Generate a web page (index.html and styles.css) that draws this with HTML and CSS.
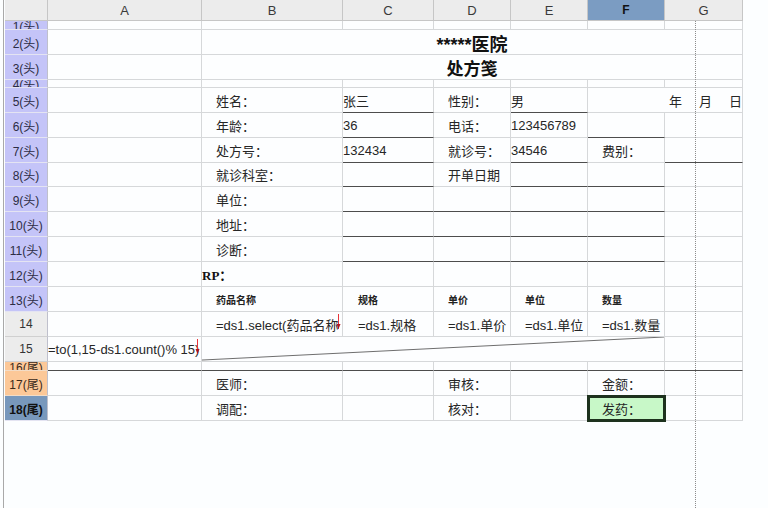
FILE: index.html
```html
<!DOCTYPE html>
<html>
<head>
<meta charset="utf-8">
<link rel="stylesheet" href="styles.css">
</head>
<body>
<div class="frame">
  <div class="sheet">
    <div class="row r21 colhead">
      <div class="c hd"></div>
      <div class="c hd ctr">A</div>
      <div class="c hd ctr">B</div>
      <div class="c hd ctr">C</div>
      <div class="c hd ctr">D</div>
      <div class="c hd ctr">E</div>
      <div class="c hd ctr sel">F</div>
      <div class="c hd ctr">G</div>
    </div>
    <div class="row r9">
      <div class="c rh tou">1(头)</div>
      <div class="c"></div><div class="c"></div><div class="c"></div><div class="c"></div><div class="c"></div><div class="c"></div><div class="c"></div>
    </div>
    <div class="row r25">
      <div class="c rh tou">2(头)</div>
      <div class="c"></div>
      <div class="c s6 ctr title1">*****医院</div>
    </div>
    <div class="row r25">
      <div class="c rh tou">3(头)</div>
      <div class="c"></div>
      <div class="c s6 ctr title2">处方笺</div>
    </div>
    <div class="row r8">
      <div class="c rh tou">4(头)</div>
      <div class="c"></div><div class="c"></div><div class="c"></div><div class="c"></div><div class="c"></div><div class="c"></div><div class="c"></div>
    </div>
    <div class="row r25">
      <div class="c rh tou">5(头)</div>
      <div class="c"></div>
      <div class="c pl">姓名：</div>
      <div class="c u p0">张三</div>
      <div class="c pl">性别：</div>
      <div class="c u p0">男</div>
      <div class="c s2 date"><span>年</span><span>月</span><span>日</span></div>
    </div>
    <div class="row r25">
      <div class="c rh tou">6(头)</div>
      <div class="c"></div>
      <div class="c pl">年龄：</div>
      <div class="c u p0">36</div>
      <div class="c pl">电话：</div>
      <div class="c p0">123456789</div>
      <div class="c u"></div>
      <div class="c"></div>
    </div>
    <div class="row r25">
      <div class="c rh tou">7(头)</div>
      <div class="c"></div>
      <div class="c pl">处方号：</div>
      <div class="c u p0">132434</div>
      <div class="c pl">就诊号：</div>
      <div class="c u p0">34546</div>
      <div class="c pl">费别：</div>
      <div class="c u"></div>
    </div>
    <div class="row r24">
      <div class="c rh tou">8(头)</div>
      <div class="c"></div>
      <div class="c pl">就诊科室：</div>
      <div class="c u"></div>
      <div class="c pl">开单日期</div>
      <div class="c u"></div>
      <div class="c u"></div>
      <div class="c"></div>
    </div>
    <div class="row r25">
      <div class="c rh tou">9(头)</div>
      <div class="c"></div>
      <div class="c pl">单位：</div>
      <div class="c u"></div><div class="c u"></div><div class="c u"></div><div class="c u"></div>
      <div class="c"></div>
    </div>
    <div class="row r25">
      <div class="c rh tou">10(头)</div>
      <div class="c"></div>
      <div class="c pl">地址：</div>
      <div class="c u"></div><div class="c u"></div><div class="c u"></div><div class="c u"></div>
      <div class="c"></div>
    </div>
    <div class="row r25">
      <div class="c rh tou">11(头)</div>
      <div class="c"></div>
      <div class="c pl">诊断：</div>
      <div class="c u"></div><div class="c u"></div><div class="c u"></div><div class="c u"></div>
      <div class="c"></div>
    </div>
    <div class="row r25">
      <div class="c rh tou">12(头)</div>
      <div class="c"></div>
      <div class="c p0 rp">RP：</div>
      <div class="c"></div><div class="c"></div><div class="c"></div><div class="c"></div><div class="c"></div>
    </div>
    <div class="row r25">
      <div class="c rh tou">13(头)</div>
      <div class="c"></div>
      <div class="c pl sm">药品名称</div>
      <div class="c pl2 sm">规格</div>
      <div class="c pl sm">单价</div>
      <div class="c pl sm">单位</div>
      <div class="c pl sm">数量</div>
      <div class="c"></div>
    </div>
    <div class="row r25">
      <div class="c rh plain">14</div>
      <div class="c"></div>
      <div class="c pl rel">=ds1.select(药品名称<svg class="mark" width="5" height="16" viewBox="0 0 5 16"><line x1="2.5" y1="0" x2="2.5" y2="15" stroke="#e8333a" stroke-width="1"/><path d="M0.5 10 L4.5 10 L2.5 15 Z" fill="#b0141c"/></svg></div>
      <div class="c pl2">=ds1.规格</div>
      <div class="c pl">=ds1.单价</div>
      <div class="c pl">=ds1.单位</div>
      <div class="c pl">=ds1.数量</div>
      <div class="c"></div>
    </div>
    <div class="row r25">
      <div class="c rh plain">15</div>
      <div class="c p0 rel">=to(1,15-ds1.count()% 15)<svg class="mark" width="5" height="16" viewBox="0 0 5 16"><line x1="2.5" y1="0" x2="2.5" y2="15" stroke="#e8333a" stroke-width="1"/><path d="M0.5 10 L4.5 10 L2.5 15 Z" fill="#b0141c"/></svg></div>
      <div class="c s5 rel"><svg class="diag" width="463" height="25" viewBox="0 0 463 25" preserveAspectRatio="none"><line x1="0" y1="24" x2="463" y2="0" stroke="#6a6a6a" stroke-width="1"/></svg></div>
      <div class="c"></div>
    </div>
    <div class="row r9">
      <div class="c rh wei">16(尾)</div>
      <div class="c u"></div><div class="c u"></div><div class="c u"></div><div class="c u"></div><div class="c u"></div><div class="c u"></div><div class="c u"></div>
    </div>
    <div class="row r25">
      <div class="c rh wei">17(尾)</div>
      <div class="c"></div>
      <div class="c pl">医师：</div>
      <div class="c"></div>
      <div class="c pl">审核：</div>
      <div class="c"></div>
      <div class="c pl">金额：</div>
      <div class="c"></div>
    </div>
    <div class="row r25">
      <div class="c rh cur">18(尾)</div>
      <div class="c"></div>
      <div class="c pl">调配：</div>
      <div class="c"></div>
      <div class="c pl">核对：</div>
      <div class="c"></div>
      <div class="c pl active">发药：</div>
      <div class="c"></div>
    </div>
  </div>
  <div class="pagebreak"></div>
</div>
</body>
</html>
```
FILE: styles.css
```css
html, body {
  margin: 0;
  padding: 0;
  background: #fcfeff;
}
body {
  font-family: "Liberation Sans", "Noto Sans CJK SC", sans-serif;
  font-size: 13px;
  color: #262626;
}
.frame {
  position: relative;
  margin-left: 3px;
  border-left: 1px solid #a9a9a9;
  padding-left: 1px;
  height: 508px;
  box-sizing: border-box;
  overflow: hidden;
}
.sheet {
  width: 738px;
}
.row {
  display: grid;
  grid-template-columns: 43px 154px 141px 91px 77px 77px 77px 78px;
}
.r21 { height: 21px; }
.r25 { height: 25px; }
.r24 { height: 24px; }
.r9 { height: 9px; }
.r8 { height: 8px; }
.c {
  box-sizing: border-box;
  border-right: 1px solid #d6d8da;
  border-bottom: 1px solid #d6d8da;
  display: flex;
  align-items: center;
  overflow: hidden;
  white-space: nowrap;
  min-width: 0;
  background: #fdfeff;
}
.ctr { justify-content: center; }
.s2 { grid-column: span 2; }
.s5 { grid-column: span 5; }
.s6 { grid-column: span 6; }
.pl { padding-left: 14px; }
.pl2 { padding-left: 15px; }
.p0 { padding-left: 0; }
.u { border-bottom: 1px solid #4d4d4d; }
.rel { position: relative; overflow: visible; }

.hd {
  background: #ececec;
  border-right: 1px solid #c6c6c6;
  border-bottom: 1px solid #c6c6c6;
  color: #3a3a3a;
  font-size: 13px;
}
.hd.sel {
  background: #7b9cc2;
  color: #111;
  font-weight: bold;
  font-size: 12px;
}
.rh {
  justify-content: center;
  font-size: 12px;
  color: #2c2c44;
  border-right: 1px solid #bfc0cc;
  border-bottom: 1px solid #e4e4f2;
}
.rh.tou { background: #c4c4f8; }
.rh.plain { background: #ececec; color: #333; border-bottom-color: #d0d0d0; }
.rh.wei { background: #fcc898; color: #3a2a1a; border-bottom-color: #f3dcc6; }
.rh.cur { background: #7898bc; color: #111; font-weight: bold; }

.title1 {
  font-weight: bold;
  font-size: 18px;
  color: #111;
  padding-top: 2px;
}
.title2 {
  font-weight: bold;
  font-size: 17px;
  color: #111;
}
.date {
  justify-content: flex-end;
  gap: 17px;
  overflow: visible;
}
.rp {
  font-family: "Liberation Serif", "Noto Sans CJK SC", serif;
  font-weight: bold;
  font-size: 13px;
  color: #111;
}
.sm {
  font-size: 10px;
  color: #222;
  font-weight: bold;
}
.mark {
  position: absolute;
  right: 1px;
  top: 2px;
}
.diag {
  position: absolute;
  left: 0;
  top: 0;
  width: 100%;
  height: 100%;
}
.active {
  background: #c8f8c8;
  outline: 3px solid #1e321e;
  outline-offset: -2px;
  position: relative;
  z-index: 1;
}
.pagebreak {
  position: absolute;
  left: 691px;
  top: 21px;
  bottom: 0;
  border-left: 1px dotted #8c8c8c;
}
```
